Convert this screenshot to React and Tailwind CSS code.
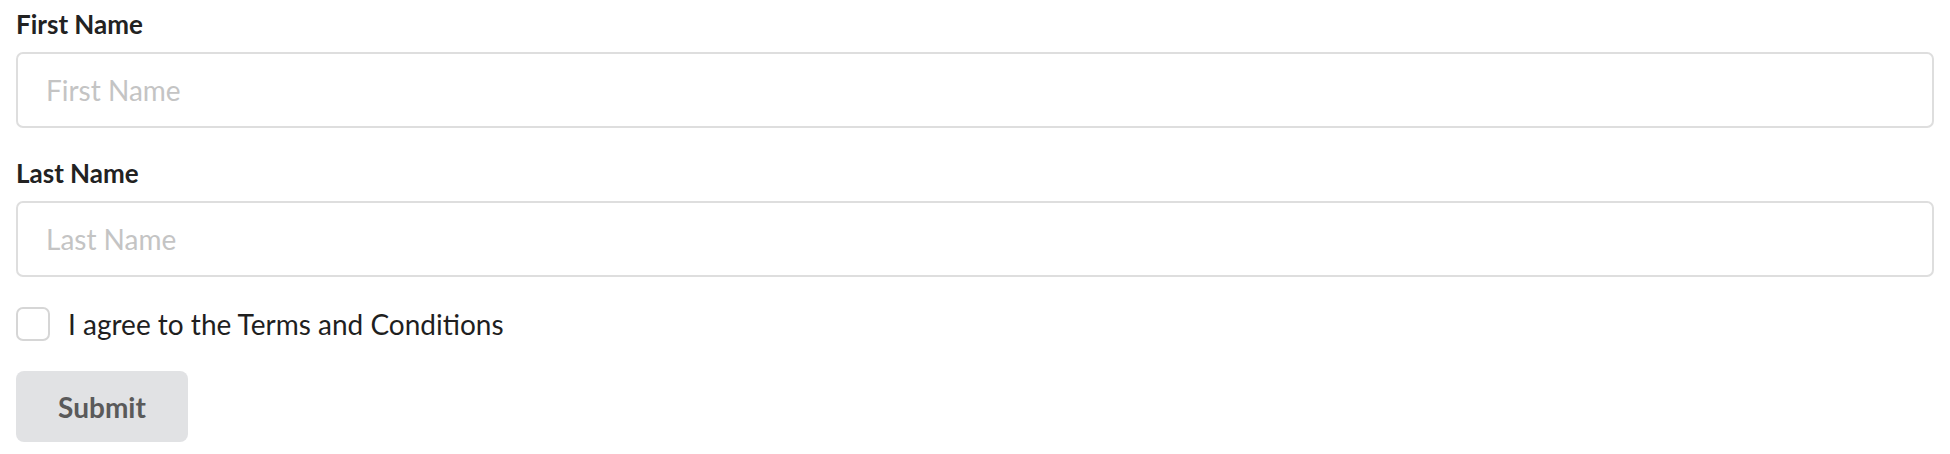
import { useState } from "react";

export default function App() {
  const [agree, setAgree] = useState(false);

  return (
    <main className="bg-white min-h-screen font-['Lato',sans-serif]">
      <form className="flex flex-col px-4 pt-[10px] pb-[11px]" onSubmit={(e) => e.preventDefault()}>
        <label htmlFor="first" className="text-[26px] leading-[29px] font-bold text-[#222222] mb-[13px]">
          First Name
        </label>
        <input
          id="first"
          type="text"
          placeholder="First Name"
          className="h-[76px] w-full rounded-[7px] border-2 border-[#dedede] pl-[28px] text-[28px] text-[#222222] placeholder:text-[#c4c4c4] outline-none"
        />

        <label htmlFor="last" className="mt-[31px] text-[26px] leading-[29px] font-bold text-[#222222] mb-[13px]">
          Last Name
        </label>
        <input
          id="last"
          type="text"
          placeholder="Last Name"
          className="h-[76px] w-full rounded-[7px] border-2 border-[#dedede] pl-[28px] text-[28px] text-[#222222] placeholder:text-[#c4c4c4] outline-none"
        />

        <label className="mt-[30px] flex items-center gap-[18px] cursor-pointer">
          <span
            className="w-[34px] h-[34px] rounded-[7px] border-2 border-[#d6d6d6] bg-white flex items-center justify-center"
            onClick={() => setAgree(!agree)}
          >
            {agree && <span className="w-3 h-3 rounded-sm bg-[#555]" />}
          </span>
          <span className="text-[28px] leading-[34px] text-[#1f1f1f]">I agree to the Terms and Conditions</span>
        </label>

        <div className="mt-[30px]">
          <button
            type="submit"
            className="h-[71px] w-[172px] rounded-[8px] bg-[#e1e2e4] text-[28px] font-bold text-[#5a5a5a]"
          >
            Submit
          </button>
        </div>
      </form>
    </main>
  );
}
